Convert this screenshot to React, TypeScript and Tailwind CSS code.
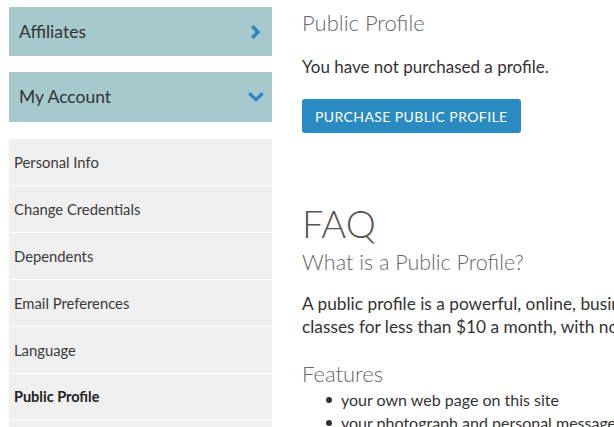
import React from "react";

const items = [
  "Personal Info",
  "Change Credentials",
  "Dependents",
  "Email Preferences",
  "Language",
  "Public Profile",
  "",
];

export default function App() {
  return (
    <div
      className="w-[614px] h-[427px] overflow-hidden flex bg-white text-[#333]"
      style={{ fontFamily: "Lato, 'Open Sans', sans-serif" }}
    >
      <div className="w-[272px] shrink-0 pl-[9px] pt-[7px] flex flex-col">
        <div className="h-[49px] shrink-0 bg-[#a5c9cd] flex items-center justify-between pl-[10px] pr-[10px]">
          <span className="text-[17.5px] text-[#333] mt-[2px]">Affiliates</span>
          <svg width="12" height="14" viewBox="0 0 12 14">
            <polyline points="3.5,2.5 8,7 3.5,11.5" fill="none" stroke="#2a88bf" strokeWidth="3.4" strokeLinecap="square" strokeLinejoin="miter" />
          </svg>
        </div>
        <div className="mt-[16px] h-[50px] shrink-0 bg-[#a5c9cd] flex items-center justify-between pl-[10px] pr-[8px]">
          <span className="text-[17.5px] text-[#333]">My Account</span>
          <svg width="16" height="12" viewBox="0 0 16 12">
            <polyline points="2.5,3.5 8,8.5 13.5,3.5" fill="none" stroke="#2a88bf" strokeWidth="3.4" strokeLinecap="square" strokeLinejoin="miter" />
          </svg>
        </div>
        <div className="mt-[17px] flex flex-col gap-[1px] shrink-0">
          {items.map((it, i) => (
            <div
              key={i}
              className="h-[46px] bg-[#f0f0f0] flex items-center pl-[5px] shrink-0"
            >
              {it && (
                <span
                  className={
                    it === "Public Profile"
                      ? "text-[14.5px] font-bold text-[#222]"
                      : "text-[14.8px] text-[#3a3a3a]"
                  }
                >
                  {it}
                </span>
              )}
            </div>
          ))}
        </div>
      </div>
      <div className="ml-[30px] flex flex-col whitespace-nowrap">
        <h2 className="mt-[8px] text-[22px] font-light text-[#666] leading-[30px]">
          Public Profile
        </h2>
        <p className="mt-[18px] text-[17px] leading-[22px] text-[#333]">
          You have not purchased a profile.
        </p>
        <div className="mt-[21px]">
          <button className="h-[34px] px-[13px] bg-[#2a8bc2] rounded-[3px] text-white text-[14px] tracking-[0.4px]">
            PURCHASE PUBLIC PROFILE
          </button>
        </div>
        <h1 className="mt-[68px] text-[38px] font-light text-[#555] leading-[44px]">
          FAQ
        </h1>
        <h3 className="mt-[3px] text-[21.5px] font-light text-[#666] leading-[28px]">
          What is a Public Profile?
        </h3>
        <p className="mt-[16px] text-[17.3px] leading-[23px] text-[#333]">
          A public profile is a powerful, online, business card that helps you promote your
          <br />
          classes for less than $10 a month, with no contract or commitment.
        </p>
        <h3 className="mt-[22px] text-[22px] font-light text-[#666] leading-[28px]">
          Features
        </h3>
        <ul className="mt-[0px] pl-[24px] text-[16px] leading-[23px] text-[#333]">
          <li className="flex items-center">
            <span className="w-[6px] h-[6px] rounded-full bg-[#333] mr-[9px] inline-block" />
            your own web page on this site
          </li>
          <li className="flex items-center">
            <span className="w-[6px] h-[6px] rounded-full bg-[#333] mr-[9px] inline-block" />
            your photograph and personal message
          </li>
        </ul>
      </div>
    </div>
  );
}
